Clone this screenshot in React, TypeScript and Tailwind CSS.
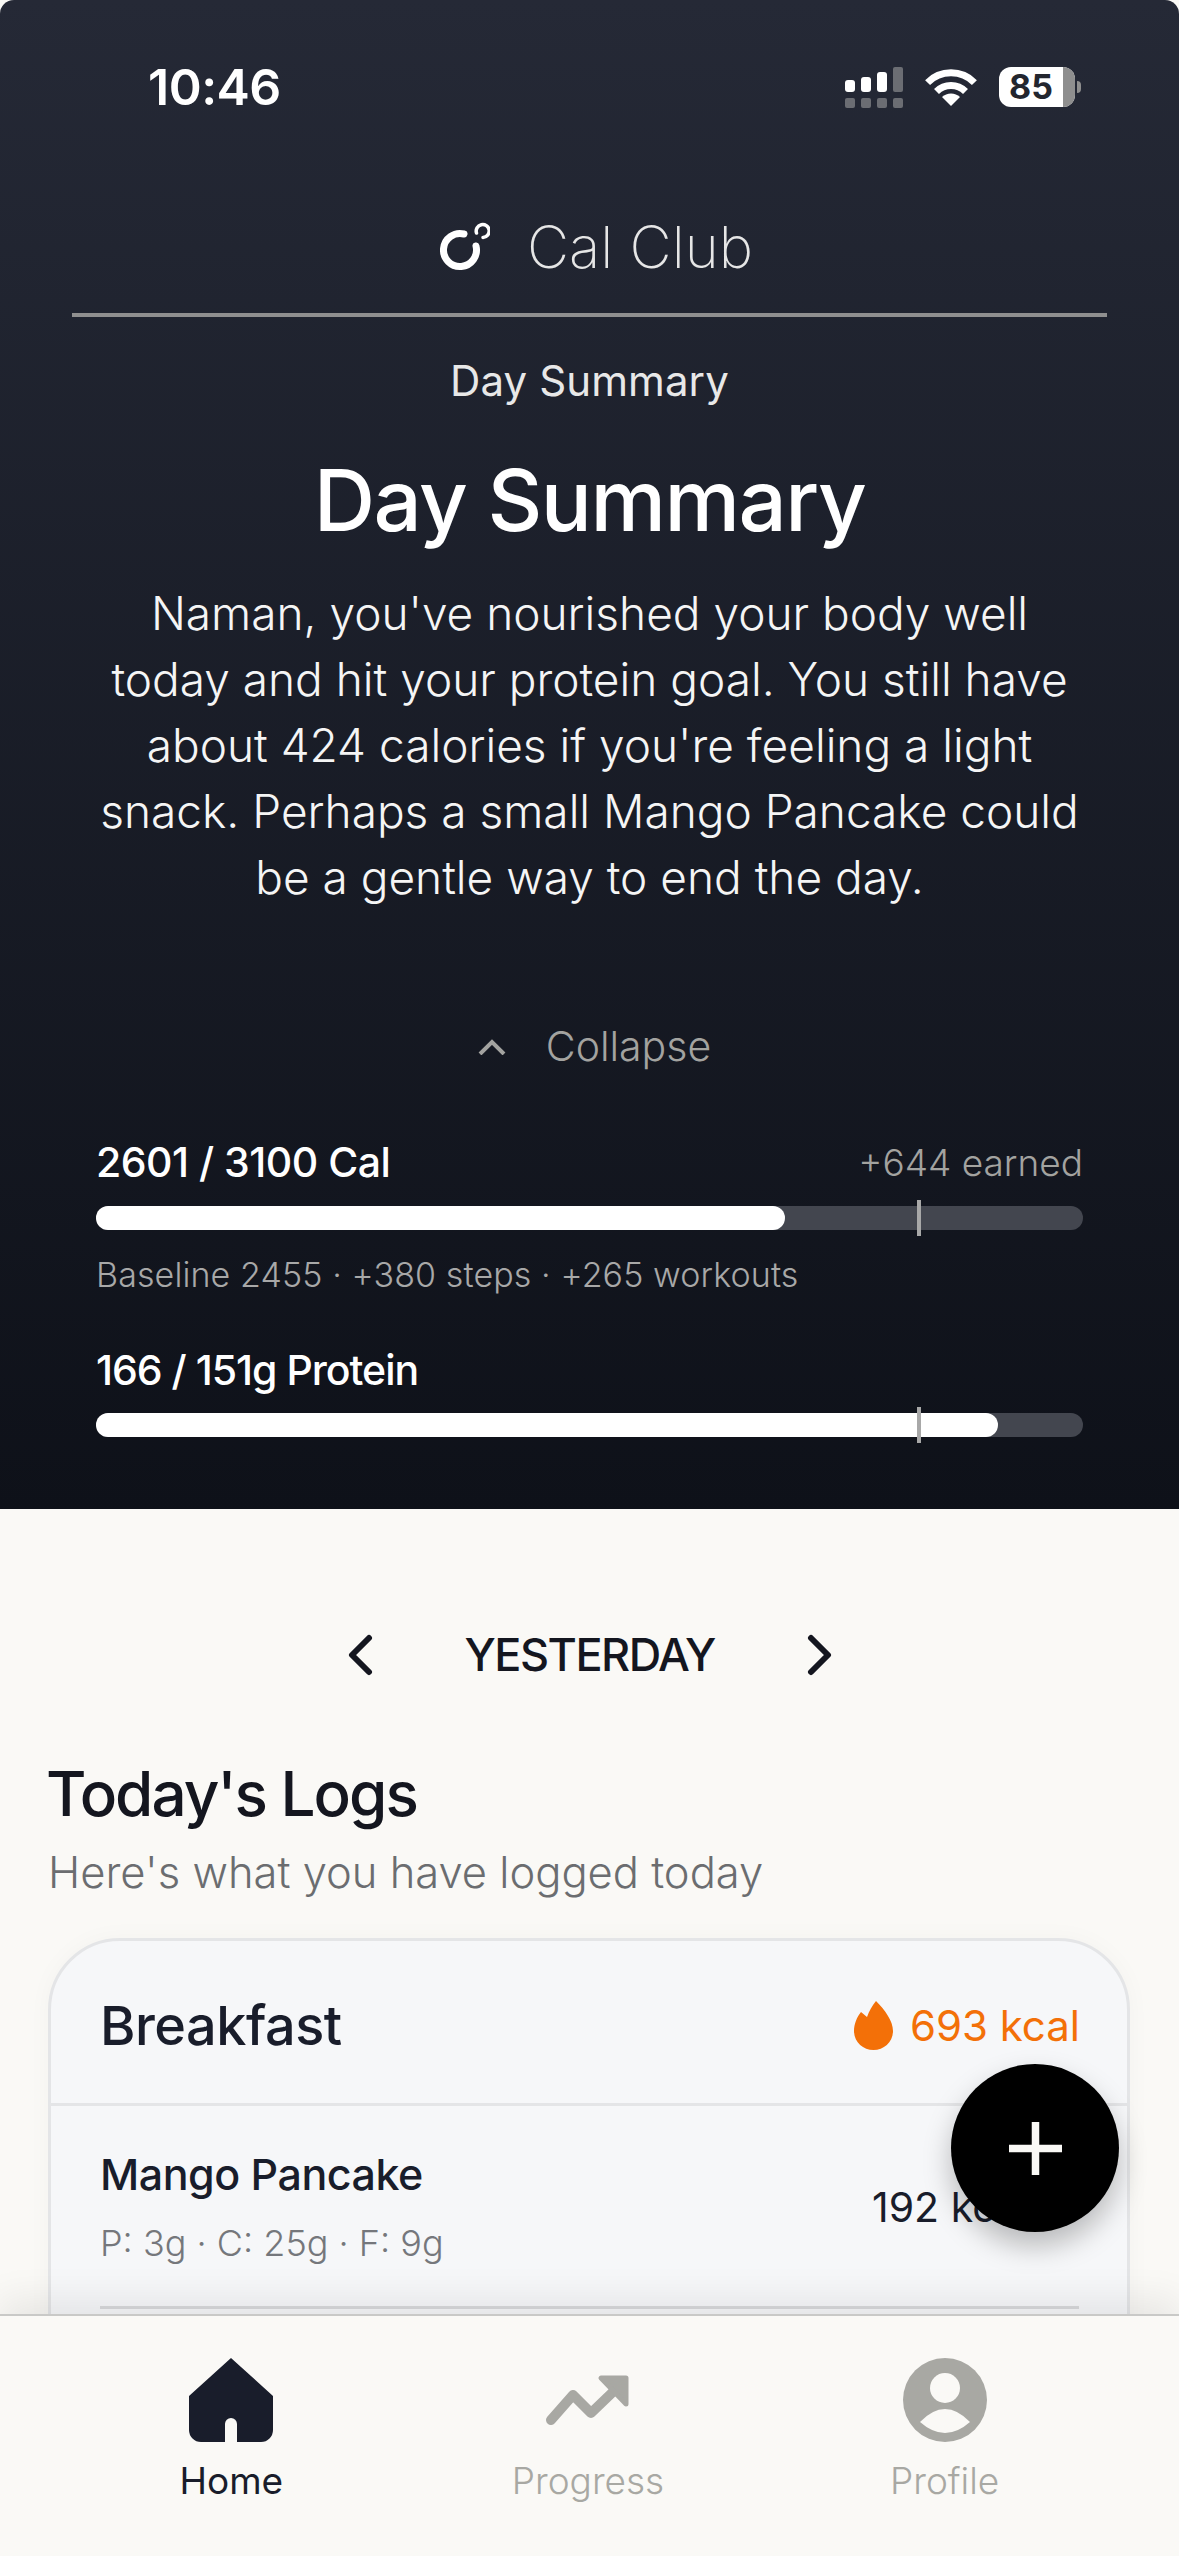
const font = "font-['Inter','Liberation_Sans',sans-serif]";

function Signal() {
  return (
    <svg width="58" height="41" viewBox="0 0 58 41">
      <rect x="0" y="13" width="10" height="12" rx="3" fill="#fff" />
      <rect x="16" y="10" width="10" height="15" rx="3" fill="#fff" />
      <rect x="32" y="5" width="10" height="20" rx="3" fill="#fff" />
      <rect x="48" y="0" width="10" height="25" rx="2" fill="#6b6d73" />
      <rect x="0" y="31" width="10" height="10" rx="2" fill="#6b6d73" />
      <rect x="16" y="31" width="10" height="10" rx="2" fill="#6b6d73" />
      <rect x="32" y="31" width="10" height="10" rx="2" fill="#6b6d73" />
      <rect x="48" y="31" width="10" height="10" rx="2" fill="#6b6d73" />
    </svg>
  );
}

function Wifi() {
  return (
    <svg width="52" height="38" viewBox="0 0 52 38" fill="none" stroke="#fff" strokeWidth="7">
      <path d="M2.6 14.6 A33 33 0 0 1 49.4 14.6" />
      <path d="M11.5 23.5 A20.5 20.5 0 0 1 40.5 23.5" />
      <path d="M17 29 L26 38 L35 29 A13 13 0 0 0 17 29 Z" fill="#fff" stroke="none" />
    </svg>
  );
}

function Logo() {
  return (
    <svg width="50" height="50" viewBox="0 0 50 50" fill="none" stroke="#fff" strokeLinecap="round">
      <path d="M24 12 A16.5 16.5 0 1 0 36 24" strokeWidth="7" />
      <path d="M36.5 11 A6.5 6.5 0 1 1 43 15.5" strokeWidth="3.5" />
    </svg>
  );
}

function Flame() {
  return (
    <svg width="39" height="49" viewBox="0 0 39 49" fill="#f37008">
      <path d="M22 0 C31 9 39 20 39 30 C39 41 30 49 19.5 49 C9 49 0 41 0 30 C0 23 3 16 7 11 L13 16 C15 10 18 5 22 0 Z" />
    </svg>
  );
}

function HomeIcon() {
  return (
    <svg width="84" height="84" viewBox="0 0 84 84" fill="#191d2b">
      <path d="M42 0 L84 38 L84 72 A12 12 0 0 1 72 84 L48 84 L48 66 A6 6 0 0 0 36 66 L36 84 L12 84 A12 12 0 0 1 0 72 L0 38 Z" />
    </svg>
  );
}

function ProgressIcon() {
  return (
    <svg width="84" height="50" viewBox="0 0 84 50" fill="none" stroke="#a8a8a3" strokeLinejoin="round" strokeLinecap="round">
      <path d="M5 45 L27 20 L45 38 L70 14" strokeWidth="10" />
      <path d="M55 3 L80 3 L80 29 Z" fill="#a8a8a3" strokeWidth="5" />
    </svg>
  );
}

function ProfileIcon() {
  return (
    <svg width="84" height="84" viewBox="0 0 84 84">
      <circle cx="42" cy="42" r="42" fill="#a8a8a3" />
      <circle cx="42" cy="30" r="15" fill="#faf9f6" />
      <path d="M17 64 Q42 38 67 64 Q42 86 17 64 Z" fill="#faf9f6" />
    </svg>
  );
}

function Bar({ fill }: { fill: string }) {
  return (
    <div className="relative mx-[96px] mt-[15px] h-[24px] rounded-full bg-[#43464f]">
      <div className={`h-full rounded-full bg-white ${fill}`} />
      <div className="absolute left-[821px] top-[-6px] h-[36px] w-[4px] bg-[#a8a8a8]" />
    </div>
  );
}

function NavItem({ label, active, children }: { label: string; active?: boolean; children: React.ReactNode }) {
  return (
    <div className="flex flex-col items-center">
      <div className="flex h-[84px] items-center">{children}</div>
      <span className={`mt-[17px] text-[37px] leading-[44px] ${active ? "text-[#191d2b]" : "font-light text-[#a8a8a3]"}`}>
        {label}
      </span>
    </div>
  );
}

export default function App() {
  return (
    <div className={`${font} relative flex h-[2556px] w-[1179px] flex-col overflow-hidden bg-[#faf9f6]`}>
      <header className="h-[1509px] shrink-0 rounded-t-[14px] bg-gradient-to-b from-[#252936] to-[#0e1119] text-white">
        <div className="flex h-[174px] items-center justify-between pl-[148px] pr-[98px]">
          <span className="text-[50px] font-semibold tracking-[-0.5px]">10:46</span>
          <div className="flex items-center gap-[22px]">
            <Signal />
            <Wifi />
            <div className="flex items-center gap-[2px]">
              <div className="flex h-[40px] w-[76px] rounded-[12px] bg-white">
                <span className="flex-1 text-center text-[34px] font-bold leading-[40px] text-[#23262f]">85</span>
                <span className="w-[12px] rounded-r-[12px] bg-[#8e8e8e]" />
              </div>
              <span className="h-[12px] w-[4px] rounded-r-full bg-[#8e8e8e]" />
            </div>
          </div>
        </div>
        <div className="flex h-[139px] items-center justify-center gap-[37px] pl-[14px] pt-[7px]">
          <Logo />
          <span className="text-[58px] font-extralight leading-none text-[#e6e6e6]">Cal Club</span>
        </div>
        <div className="mx-[72px] h-[4px] bg-[#8f8f8f]" />
        <p className="mt-[34px] text-center text-[42px] leading-[60px] tracking-[0.1px] text-[#e8e8e8]">Day Summary</p>
        <h1 className="mt-[40px] text-center text-[85px] font-medium leading-[100px] tracking-[-1.5px]">Day Summary</h1>
        <p className="mt-[29px] text-center text-[46px] font-light leading-[66px] text-[#f5f5f5]">
          Naman, you've nourished your body well
          <br />
          today and hit your protein goal. You still have
          <br />
          about 424 calories if you're feeling a light
          <br />
          snack. Perhaps a small Mango Pancake could
          <br />
          be a gentle way to end the day.
        </p>
        <div className="mt-[107px] flex h-[60px] items-center justify-center gap-[40px] pl-[10px] text-[#a3a3a0]">
          <svg width="28" height="16" viewBox="0 0 28 16" fill="none" stroke="currentColor" strokeWidth="4">
            <path d="M2 15 L14 3 L26 15" />
          </svg>
          <span className="text-[41px] font-light">Collapse</span>
        </div>
        <div className="mx-[96px] mt-[58px] flex h-[56px] items-center justify-between">
          <span className="text-[41px] font-medium tracking-[-0.5px]">2601 / 3100 Cal</span>
          <span className="text-[37px] font-light text-[#a3a3a0]">+644 earned</span>
        </div>
        <Bar fill="w-[689px]" />
        <p className="mx-[96px] mt-[20px] text-[34px] font-light leading-[50px] tracking-[0.1px] text-[#a8a8a8]">
          Baseline 2455 · +380 steps · +265 workouts
        </p>
        <p className="mx-[96px] mt-[42px] text-[41px] font-medium leading-[56px] tracking-[-1px]">166 / 151g Protein</p>
        <Bar fill="w-[902px]" />
      </header>

      <main className="relative flex-1 overflow-hidden">
        <div className="mt-[116px] flex h-[60px] items-center justify-center gap-[92px]">
          <svg width="26" height="42" viewBox="0 0 26 42" fill="none" stroke="#14161f" strokeWidth="6" strokeLinecap="round" strokeLinejoin="round">
            <path d="M22 4 L5 21 L22 38" />
          </svg>
          <span className="w-[250px] text-center text-[45px] font-medium tracking-[-1.5px] text-[#14161f]">YESTERDAY</span>
          <svg width="26" height="42" viewBox="0 0 26 42" fill="none" stroke="#14161f" strokeWidth="6" strokeLinecap="round" strokeLinejoin="round">
            <path d="M4 4 L21 21 L4 38" />
          </svg>
        </div>
        <h2 className="ml-[46px] mt-[69px] text-[62px] font-medium leading-[80px] tracking-[-2px] text-[#14161f]">Today's Logs</h2>
        <p className="ml-[48px] mt-[10px] text-[43.5px] font-light leading-[56px] text-[#6b6d70]">Here's what you have logged today</p>
        <section className="ml-[48px] mr-[49px] mt-[38px] rounded-t-[72px] border-[3px] border-[#e4e5e7] bg-[#f6f7f9] shadow-[0_0_24px_rgba(0,0,0,0.03)]">
          <div className="flex h-[165px] items-center justify-between border-b-[3px] border-[#e4e5e7] pl-[49px] pr-[47px] pt-[7px]">
            <span className="text-[54px] font-medium tracking-[-0.5px] text-[#191d2b]">Breakfast</span>
            <div className="flex items-center gap-[17px]">
              <Flame />
              <span className="text-[42px] text-[#f37008]">693 kcal</span>
            </div>
          </div>
          <div className="ml-[49px] mr-[48px] flex h-[203px] items-center justify-between border-b-[3px] border-[#d9dadc] pr-[50px]">
            <div>
              <p className="text-[43px] font-medium leading-[60px] tracking-[-0.5px] text-[#191d2b]">Mango Pancake</p>
              <p className="mt-[14px] text-[36px] font-light leading-[50px] text-[#75777c]">P: 3g · C: 25g · F: 9g</p>
            </div>
            <span className="mt-[2px] text-[41px] leading-[50px] text-[#191d2b]">192 kcal</span>
          </div>
          <div className="h-[40px]" />
        </section>
      </main>

      <nav className="relative z-10 grid h-[242px] shrink-0 grid-cols-3 border-t-[2px] border-[#c9c9c7] bg-[#faf9f6] pl-[53px] pr-[56px] pt-[42px] shadow-[0_-14px_36px_rgba(0,0,0,0.08)]">
        <NavItem label="Home" active>
          <HomeIcon />
        </NavItem>
        <NavItem label="Progress">
          <ProgressIcon />
        </NavItem>
        <NavItem label="Profile">
          <ProfileIcon />
        </NavItem>
      </nav>

      <button className="absolute left-[951px] top-[2064px] z-20 flex h-[168px] w-[168px] items-center justify-center rounded-full bg-black shadow-[0_14px_28px_rgba(0,0,0,0.25)]">
        <svg width="53" height="53" viewBox="0 0 53 53" stroke="#faf9f6" strokeWidth="7.5">
          <path d="M26.5 0 V53 M0 26.5 H53" />
        </svg>
      </button>
    </div>
  );
}
